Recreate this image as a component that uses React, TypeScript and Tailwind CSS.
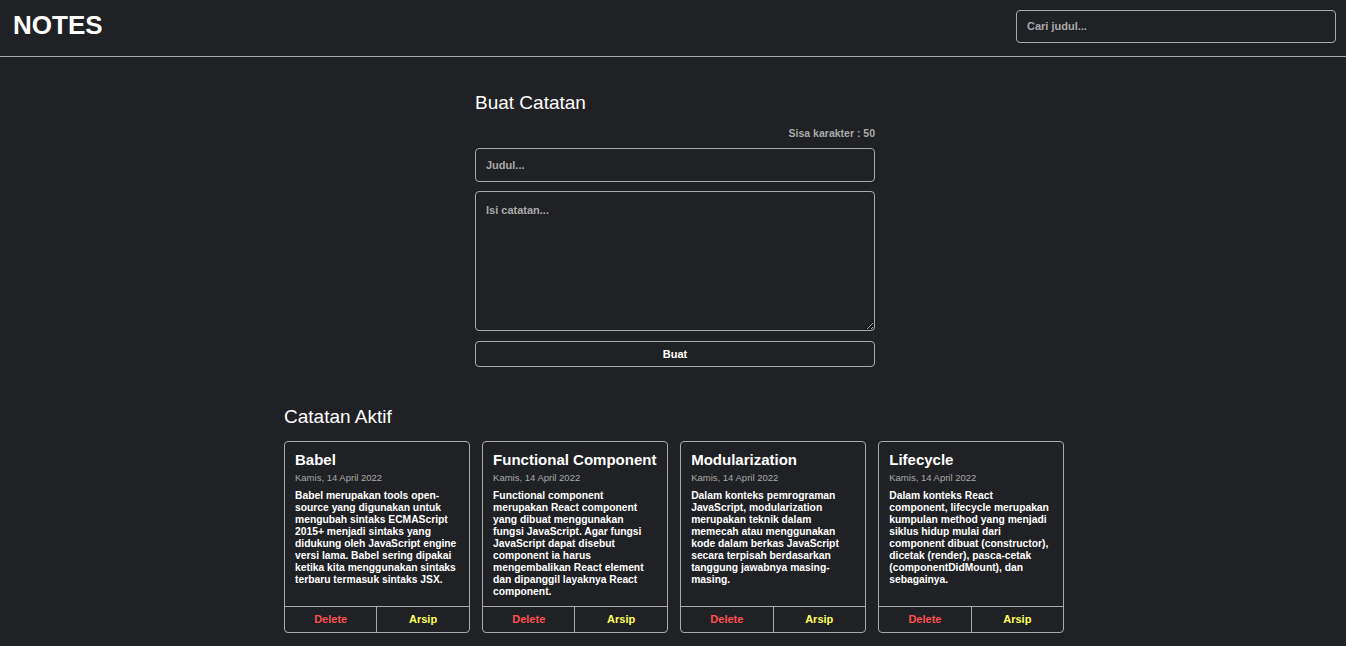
const notes = [
  {
    id: 1,
    title: "Babel",
    date: "Kamis, 14 April 2022",
    body: "Babel merupakan tools open-source yang digunakan untuk mengubah sintaks ECMAScript 2015+ menjadi sintaks yang didukung oleh JavaScript engine versi lama. Babel sering dipakai ketika kita menggunakan sintaks terbaru termasuk sintaks JSX.",
  },
  {
    id: 2,
    title: "Functional Component",
    date: "Kamis, 14 April 2022",
    body: "Functional component merupakan React component yang dibuat menggunakan fungsi JavaScript. Agar fungsi JavaScript dapat disebut component ia harus mengembalikan React element dan dipanggil layaknya React component.",
  },
  {
    id: 3,
    title: "Modularization",
    date: "Kamis, 14 April 2022",
    body: "Dalam konteks pemrograman JavaScript, modularization merupakan teknik dalam memecah atau menggunakan kode dalam berkas JavaScript secara terpisah berdasarkan tanggung jawabnya masing-masing.",
  },
  {
    id: 4,
    title: "Lifecycle",
    date: "Kamis, 14 April 2022",
    body: "Dalam konteks React component, lifecycle merupakan kumpulan method yang menjadi siklus hidup mulai dari component dibuat (constructor), dicetak (render), pasca-cetak (componentDidMount), dan sebagainya.",
  },
];

function NoteItem({ title, date, body }: { title: string; date: string; body: string }) {
  return (
    <div className="flex flex-col w-[186px] h-[192px] border border-[#aaaaaa] rounded-[4px]">
      <div className="flex-1 px-[10px] pt-[9px]">
        <h3 className="text-[15px] leading-[18px] font-bold text-white whitespace-nowrap">{title}</h3>
        <p className="text-[9.5px] leading-[12px] text-[#aaaaaa] mt-[3px]">{date}</p>
        <p className="text-[10.3px] leading-[12px] font-bold text-white mt-[6px]">{body}</p>
      </div>
      <div className="flex h-[26px] border-t border-[#aaaaaa]">
        <button className="flex-1 text-[11px] font-bold text-[#ff5050] border-r border-[#aaaaaa]">Delete</button>
        <button className="flex-1 text-[11px] font-bold text-[#ffff60]">Arsip</button>
      </div>
    </div>
  );
}

export default function App() {
  return (
    <div className="min-h-screen bg-[#202124] text-white" style={{ fontFamily: '"Liberation Sans", Arial, sans-serif' }}>
      <header className="flex items-center justify-between h-[57px] px-[10px] border-b border-[#aaaaaa]">
        <h1 className="text-[26px] font-bold pl-[3px] -mt-[5px]">NOTES</h1>
        <input
          placeholder="Cari judul..."
          className="w-[320px] h-[33px] -mt-[4px] px-[10px] bg-transparent border border-[#aaaaaa] rounded-[4px] text-[11px] font-bold text-white placeholder:text-[#aaaaaa] outline-none"
        />
      </header>

      <main className="w-[782px] mx-auto pl-[2px]">
        <section className="w-[400px] mx-auto pt-[34px] pl-[2px] box-content">
          <h2 className="text-[19px] leading-[24px]">Buat Catatan</h2>
          <p className="text-right text-[10.5px] font-bold text-[#aaaaaa] mt-[11px]">Sisa karakter : 50</p>
          <input
            placeholder="Judul..."
            className="block w-full h-[34px] mt-[6px] px-[10px] bg-transparent border border-[#aaaaaa] rounded-[4px] text-[11px] font-bold text-white placeholder:text-[#aaaaaa] outline-none"
          />
          <textarea
            placeholder="Isi catatan..."
            className="block w-full h-[140px] mt-[9px] px-[10px] py-[10px] bg-transparent border border-[#aaaaaa] rounded-[4px] text-[11px] font-bold text-white placeholder:text-[#aaaaaa] outline-none"
          />
          <button className="block w-full h-[26px] mt-[10px] border border-[#aaaaaa] rounded-[4px] text-[11px] font-bold text-white">
            Buat
          </button>
        </section>

        <section className="pt-[38px] pb-[20px]">
          <h2 className="text-[19px] leading-[24px]">Catatan Aktif</h2>
          <div className="flex gap-[12.3px] mt-[12px]">
            {notes.map((n) => (
              <NoteItem key={n.id} title={n.title} date={n.date} body={n.body} />
            ))}
          </div>
        </section>
      </main>
    </div>
  );
}
